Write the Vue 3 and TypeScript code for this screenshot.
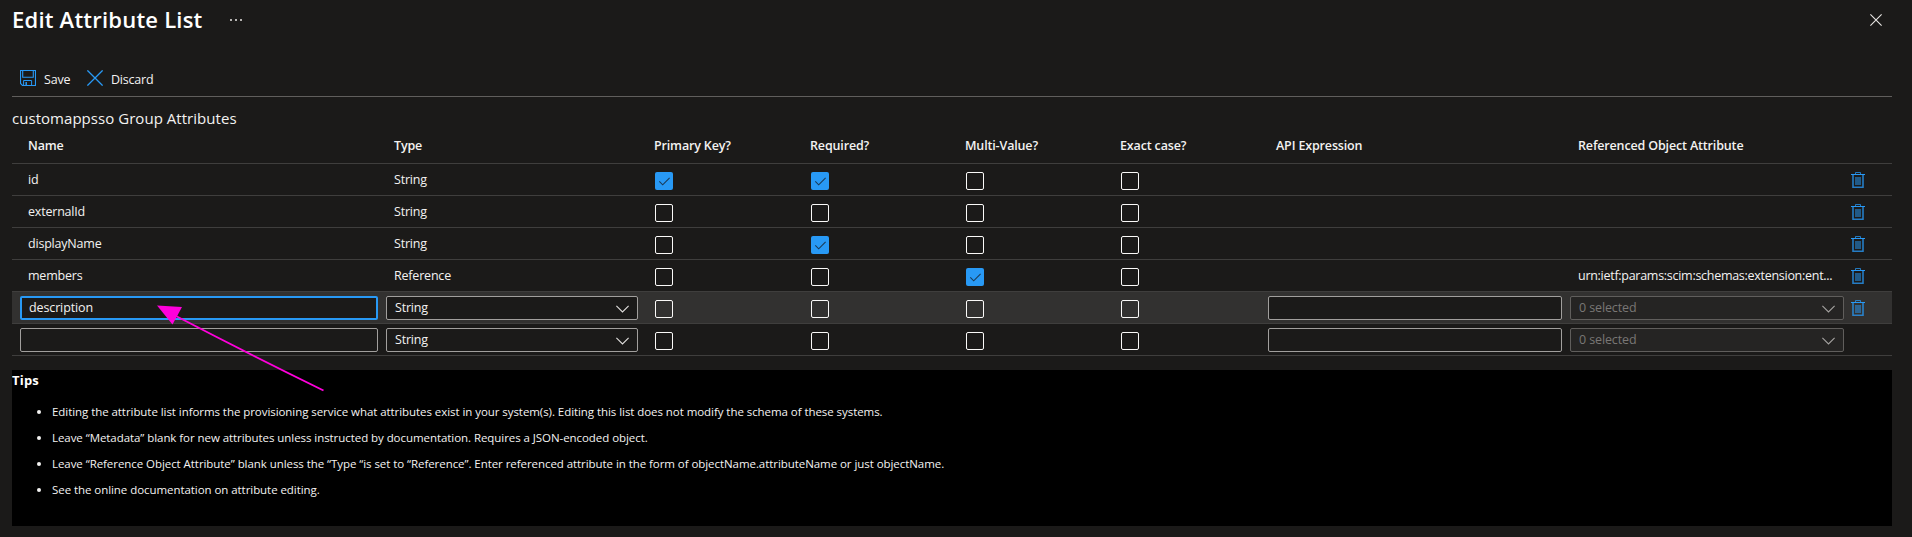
<script setup lang="ts">
interface Attribute {
  name: string
  type: string
  flags: boolean[]
  reference?: string
  editable?: boolean
  active?: boolean
  removable: boolean
}

const flagNames = ['Primary Key?', 'Required?', 'Multi-Value?', 'Exact case?']
const headers = ['Name', 'Type', ...flagNames, 'API Expression', 'Referenced Object Attribute']

const rows: Attribute[] = [
  { name: 'id', type: 'String', flags: [true, true, false, false], removable: true },
  { name: 'externalId', type: 'String', flags: [false, false, false, false], removable: true },
  { name: 'displayName', type: 'String', flags: [false, true, false, false], removable: true },
  {
    name: 'members',
    type: 'Reference',
    flags: [false, false, true, false],
    reference: 'urn:ietf:params:scim:schemas:extension:ent...',
    removable: true,
  },
  { name: 'description', type: 'String', flags: [false, false, false, false], editable: true, active: true, removable: true },
  { name: '', type: 'String', flags: [false, false, false, false], editable: true, removable: false },
]

const tips = [
  'Editing the attribute list informs the provisioning service what attributes exist in your system(s). Editing this list does not modify the schema of these systems.',
  'Leave “Metadata” blank for new attributes unless instructed by documentation. Requires a JSON-encoded object.',
  'Leave “Reference Object Attribute” blank unless the “Type “is set to “Reference”. Enter referenced attribute in the form of objectName.attributeName or just objectName.',
  'See the online documentation on attribute editing.',
]
</script>

<template>
  <main class="blade">
    <header class="titlebar">
      <h1>Edit Attribute List</h1>
      <span class="more"><i></i><i></i><i></i></span>
      <svg class="close" width="12" height="12" viewBox="0 0 12 12">
        <path d="M.4.4l11.2 11.2M11.6.4L.4 11.6" stroke="#e8e6e4" stroke-width="1.1" />
      </svg>
    </header>

    <div class="toolbar">
      <div class="command save">
        <svg width="16" height="16" viewBox="0 0 16 16" fill="none" stroke="#2899f5">
          <path d="M.5.5h15v15H2.5l-2-2z" stroke-width="1.15" />
          <path d="M2.700 .5v6.800h10.600V.5" stroke-width="1.1" />
          <path d="M3.6 15.500v-5h8v5" />
          <path d="M6.200 12v3.500" stroke-width="1.5" />
        </svg>
        <span>Save</span>
      </div>
      <div class="command">
        <svg width="16" height="16" viewBox="0 0 16 16">
          <path d="M.4.4l15.2 15.2M15.6.4L.4 15.6" stroke="#2899f5" stroke-width="1.3" />
        </svg>
        <span>Discard</span>
      </div>
    </div>

    <h2>customappsso Group Attributes</h2>

    <section class="table">
      <div class="row head">
        <div v-for="h in headers" :key="h" class="cell">{{ h }}</div>
      </div>
      <div v-for="(row, i) in rows" :key="i" class="row" :class="{ active: row.active }">
        <template v-if="row.editable">
          <div class="field" :class="{ focused: row.active }">{{ row.name }}</div>
          <div class="field">
            <span>{{ row.type }}</span>
            <svg class="chevron" width="13" height="8" viewBox="0 0 13 8">
              <path d="M.4.8l6.1 6.1L12.6.8" fill="none" stroke="#e1dfdd" stroke-width="1.1" />
            </svg>
          </div>
        </template>
        <template v-else>
          <div class="cell">{{ row.name }}</div>
          <div class="cell">{{ row.type }}</div>
        </template>

        <div v-for="(on, f) in row.flags" :key="flagNames[f]" class="flag">
          <span class="box" :class="{ on }">
            <svg v-if="on" width="18" height="18" viewBox="0 0 18 18">
              <path d="M4.3 9.4l3.4 3.4 6.9-6.9" fill="none" stroke="#1b3a57" stroke-width="1.1" />
            </svg>
          </span>
        </div>

        <template v-if="row.editable">
          <div class="field"></div>
          <div class="field disabled">
            <span>0 selected</span>
            <svg class="chevron" width="13" height="8" viewBox="0 0 13 8">
              <path d="M.4.8l6.1 6.1L12.6.8" fill="none" stroke="#a5a3a1" stroke-width="1.1" />
            </svg>
          </div>
        </template>
        <template v-else>
          <div class="cell"></div>
          <div class="cell urn">{{ row.reference }}</div>
        </template>

        <div class="remove">
          <svg v-if="row.removable" width="14" height="16" viewBox="0 0 14 16">
            <path d="M4.5 2V.5h5V2" fill="none" stroke="#2899f5" stroke-opacity=".75" />
            <path d="M0 2.5h14" stroke="#2899f5" />
            <path d="M2 3v12.2h10V3" fill="none" stroke="#2899f5" stroke-width="1.6" stroke-opacity=".78" />
            <path d="M4 5h6v8H4z" fill="#2899f5" fill-opacity=".5" />
          </svg>
        </div>
      </div>
    </section>

    <section class="tips">
      <h3>Tips</h3>
      <ul>
        <li v-for="tip in tips" :key="tip">{{ tip }}</li>
      </ul>
    </section>

    <svg class="pointer" width="172" height="90" viewBox="0 0 172 90">
      <path d="M20 11.500Q92 49 168.500 86.500" fill="none" stroke="#ff00dc" stroke-width="1.9" />
      <path d="M2 1.500L27 3 17.500 20.500z" fill="#ff00dc" />
    </svg>
  </main>
</template>

<style>
html,
body {
  margin: 0;
  background: #1b1a19;
}
</style>

<style scoped>
* {
  box-sizing: border-box;
}

.blade {
  position: relative;
  height: 537px;
  padding: 0 20px 0 12px;
  overflow: hidden;
  background: #1b1a19;
  color: #f3f2f1;
  font: 12.5px/20px 'Open Sans', 'Noto Sans', sans-serif;
  letter-spacing: -0.2px;
}

.titlebar {
  display: flex;
  height: 64px;
}

h1 {
  margin: 4px 0 0;
  font-size: 22px;
  line-height: 30px;
  font-weight: 600;
  letter-spacing: 0.22px;
  color: #fff;
}

.more {
  display: flex;
  gap: 3px;
  margin: 19px 0 0 27px;
}

.more i {
  width: 2px;
  height: 2px;
  background: #b5b3b1;
}

.close {
  margin: 14px 10px 0 auto;
}

.toolbar {
  display: flex;
  gap: 16px;
  height: 33px;
  padding: 6px 8px 0;
  border-bottom: 1px solid #605e5c;
}

.command {
  display: flex;
  gap: 8px;
}

.command.save {
  width: 51px;
}

h2 {
  height: 34px;
  margin: 11px 0 0;
  font-size: 15px;
  line-height: 21px;
  font-weight: 400;
  letter-spacing: 0.04px;
}

.table {
  margin-top: -7px;
}

.row {
  display: grid;
  grid-template-columns: 366px 260px 156px 155px 155px 156px 302px 282px 1fr;
  height: 32px;
  padding-left: 8px;
  border-bottom: 1px solid #3f3e3d;
}

.row.head {
  height: 29px;
  font-weight: 600;
  letter-spacing: -0.15px;
}

.row.head .cell {
  line-height: 22px;
}

.row.active {
  background: #323130;
}

.cell {
  padding-left: 8px;
  line-height: 32px;
  white-space: nowrap;
}

.cell.urn {
  letter-spacing: -0.28px;
}

.field {
  display: flex;
  justify-content: space-between;
  height: 24px;
  margin: 4px 8px 0 0;
  padding: 0 8px;
  border: 1px solid #a19f9d;
  border-radius: 2px;
  background: #1b1a19;
  line-height: 22px;
}

.field.focused {
  padding: 0 7px;
  border: 2px solid #2899f5;
  line-height: 20px;
  letter-spacing: -0.12px;
}

.field.disabled {
  border-color: #605e5c;
  background: #252423;
  color: #797775;
  letter-spacing: -0.12px;
}

.chevron {
  margin-top: 8px;
}

.flag {
  padding: 8px 0 0 9px;
}

.box {
  display: block;
  width: 18px;
  height: 18px;
  border: 1px solid #faf9f8;
  border-radius: 2px;
}

.box.on {
  border: 0;
  background: #2899f5;
}

.box svg {
  display: block;
}

.remove {
  padding-top: 8px;
}

.remove svg {
  display: block;
  margin-left: -1px;
}

.tips {
  height: 156px;
  margin-top: 14px;
  overflow: hidden;
  background: #000;
}

h3 {
  margin: 0;
  font-size: 13px;
  line-height: 20px;
  font-weight: 700;
  letter-spacing: 0.2px;
  color: #fff;
}

ul {
  margin: 9px 0 0;
  padding-left: 40px;
  font-size: 11.5px;
  line-height: 26px;
  letter-spacing: -0.06px;
}

.pointer {
  position: absolute;
  left: 155px;
  top: 304px;
}
</style>
